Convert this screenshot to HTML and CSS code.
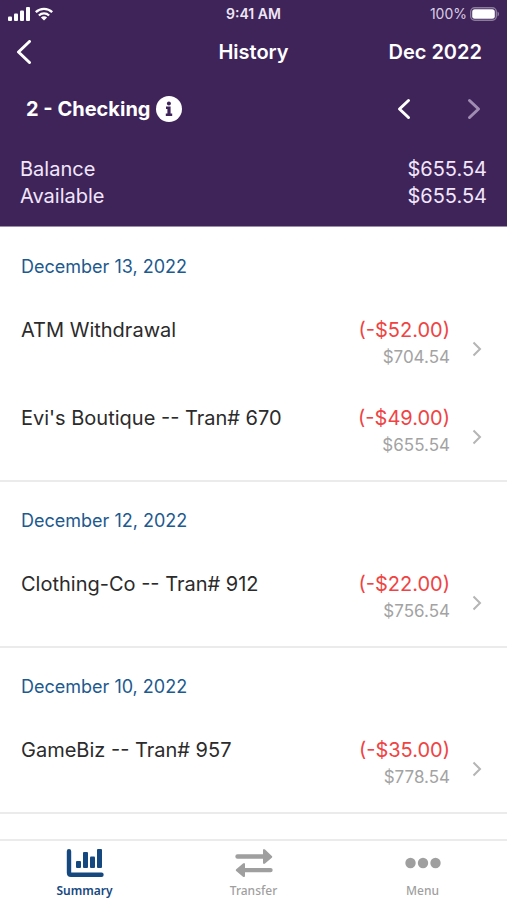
FILE: index.html
```html
<!DOCTYPE html>
<html lang="en">
<head>
<meta charset="utf-8">
<meta name="viewport" content="width=device-width, initial-scale=1">
<title>History</title>
<link rel="stylesheet" href="styles.css">
</head>
<body>
<svg class="defs" aria-hidden="true">
  <symbol id="chevron" viewBox="0 0 10 16"><path d="M1.500 1.500 8 8l-6.500 6.500"/></symbol>
</svg>
<header class="header">
  <div class="status">
    <div class="signals">
      <svg width="22" height="14" viewBox="0 0 22 14" aria-hidden="true"><g fill="#fff"><rect y="9.500" width="4" height="4.500" rx="1"/><rect x="6" y="6.500" width="4" height="7.500" rx="1"/><rect x="12" y="3.500" width="4" height="10.500" rx="1"/><rect x="18" y="0" width="4" height="14" rx="1"/></g></svg>
      <svg width="18" height="14" viewBox="0 0 18 14" aria-hidden="true"><g fill="none" stroke="#fff" stroke-width="2.300"><path d="M.8 5.200a11.800 11.800 0 0 1 16.400 0"/><path d="M3.900 8.500a7.400 7.400 0 0 1 10.200 0"/></g><path d="M9 13.600 5.900 10.500a4.400 4.400 0 0 1 6.200 0Z" fill="#fff"/></svg>
    </div>
    <span class="clock">9:41 AM</span>
    <div class="power">
      <span>100%</span>
      <svg width="29" height="14" viewBox="0 0 29 14" aria-hidden="true"><rect x=".7" y=".7" width="25.600" height="12.600" rx="4" fill="none" stroke="#8b7b9c" stroke-width="1.400"/><rect x="2.200" y="2.200" width="22.600" height="9.600" rx="2.500" fill="#fff"/><path d="M27.500 4.500c2 .8 2 4.200 0 5Z" fill="#8b7b9c"/></svg>
    </div>
  </div>
  <nav class="navbar">
    <button class="back" aria-label="Back"><svg width="16" height="24" viewBox="0 0 16 24"><path d="M13.500 1.500 2.500 12l11 10.500"/></svg></button>
    <h1>History</h1>
    <button class="month">Dec 2022</button>
  </nav>
  <div class="account">
    <h2>2 - Checking</h2>
    <button class="info" aria-label="Account information"><svg width="26" height="26" viewBox="0 0 26 26"><circle cx="13" cy="13" r="13" fill="#fff"/><path d="M10 10.500h4.600v7h1.600V20H9.800v-2.500h1.600V13H10Z" fill="#3f245a"/><circle cx="12.900" cy="7.600" r="2" fill="#3f245a"/></svg></button>
    <div class="pager">
      <button aria-label="Previous account"><svg width="14" height="22" viewBox="0 0 14 22"><path d="M11.500 2.500 2.500 11l9 8.500"/></svg></button>
      <button aria-label="Next account" disabled><svg width="14" height="22" viewBox="0 0 14 22"><path d="m2.500 2.500 9 8.500-9 8.500"/></svg></button>
    </div>
  </div>
  <dl class="balances">
    <div><dt>Balance</dt><dd>$655.54</dd></div>
    <div><dt>Available</dt><dd>$655.54</dd></div>
  </dl>
</header>
<main class="history">
  <section>
    <h3>December 13, 2022</h3>
    <a class="row" href="#"><span class="name">ATM Withdrawal</span><span class="sums"><span class="amount">(-$52.00)</span><span class="running">$704.54</span></span><svg class="chevron"><use href="#chevron"/></svg></a>
    <a class="row" href="#"><span class="name">Evi's Boutique -- Tran# 670</span><span class="sums"><span class="amount">(-$49.00)</span><span class="running">$655.54</span></span><svg class="chevron"><use href="#chevron"/></svg></a>
  </section>
  <section>
    <h3>December 12, 2022</h3>
    <a class="row" href="#"><span class="name">Clothing-Co -- Tran# 912</span><span class="sums"><span class="amount">(-$22.00)</span><span class="running">$756.54</span></span><svg class="chevron"><use href="#chevron"/></svg></a>
  </section>
  <section>
    <h3>December 10, 2022</h3>
    <a class="row" href="#"><span class="name">GameBiz -- Tran# 957</span><span class="sums"><span class="amount">(-$35.00)</span><span class="running">$778.54</span></span><svg class="chevron"><use href="#chevron"/></svg></a>
  </section>
</main>
<nav class="tabs">
  <a class="active" href="#"><svg width="38" height="28" viewBox="0 0 38 28" aria-hidden="true"><path d="M3 2.300v21.400q0 2 2 2h30.500" fill="none" stroke="currentColor" stroke-width="4.400" stroke-linecap="round" stroke-linejoin="round"/><g fill="currentColor"><rect x="10" y="12" width="5" height="7" rx="1"/><rect x="17" y="3" width="5" height="16" rx="1"/><rect x="24" y="7.500" width="5" height="11.500" rx="1"/><rect x="31" y="0" width="5" height="19" rx="1"/></g></svg>Summary</a>
  <a href="#"><svg width="38" height="28" viewBox="0 0 38 28" aria-hidden="true"><g fill="currentColor"><path d="M2.500 5.300H28V1.200q.4-2 2-.6l6.800 6.300q.9.900 0 1.800L30 14.500q-1.600 1.200-2-.8V9.700H2.500a2.200 2.200 0 0 1 0-4.400Z"/><path d="M35.500 18.900H10v-3.800q-.4-2-2-.6L1.200 20.200q-.9.900 0 1.800L8 27.700q1.600 1 2-.8v-3.600h25.500a2.200 2.200 0 0 0 0-4.400Z"/></g></svg>Transfer</a>
  <a href="#"><svg width="38" height="28" viewBox="0 0 38 28" aria-hidden="true"><g fill="currentColor"><circle cx="6.500" cy="14" r="5.200"/><circle cx="19" cy="14" r="5.200"/><circle cx="31.500" cy="14" r="5.200"/></g></svg>Menu</a>
</nav>
</body>
</html>
```
FILE: styles.css
```css
* { box-sizing: border-box; }

body {
  margin: 0;
  min-height: 100vh;
  display: flex;
  flex-direction: column;
  background: #fff;
  color: #2b2b2b;
  font-family: Inter, "Liberation Sans", sans-serif;
  font-size: 20px;
}

h1, h2, h3, dl, dt, dd { margin: 0; font-weight: 400; }

button {
  display: flex;
  padding: 0;
  border: 0;
  background: none;
  color: inherit;
  font: inherit;
}

a { color: inherit; text-decoration: none; }

svg { display: block; flex: none; }

.defs { width: 0; height: 0; position: absolute; }

.header {
  background: #3f245a;
  color: #fff;
  border-bottom: 1px solid #9b8ca9;
}

.header button svg {
  fill: none;
  stroke: currentColor;
  stroke-width: 3;
  stroke-linecap: round;
  stroke-linejoin: round;
}

.status {
  display: grid;
  grid-template-columns: 1fr auto 1fr;
  align-items: center;
  height: 27px;
  padding: 0 8px;
  font-size: 14px;
}

.signals { display: flex; gap: 5px; }
.clock { font-weight: 600; color: #eee6f5; }
.power { display: flex; justify-content: flex-end; align-items: center; gap: 3px; color: #d9cee2; }

.navbar {
  display: grid;
  grid-template-columns: 1fr auto 1fr;
  align-items: center;
  height: 49px;
  padding: 0 16px;
}

.navbar h1, .month { font-size: 20px; font-weight: 600; }
.month { justify-self: end; margin-right: 9px; }

.account {
  display: flex;
  align-items: center;
  gap: 6px;
  height: 66px;
  padding: 0 26px;
}

.account h2 { font-size: 20px; font-weight: 700; }
.header .info svg { stroke: none; }
.pager { display: flex; gap: 56px; margin-left: auto; }
.pager button:disabled { color: #a08db2; }

.balances {
  padding: 14px 20px 16px;
  line-height: 27px;
  color: #f1e6fa;
}

.balances div { display: flex; justify-content: space-between; }

.history { flex: 1; padding-top: 1px; }

.history section { border-bottom: 2px solid #ebebeb; padding-bottom: 10px; }

.history h3 {
  padding: 0 21px;
  font-size: 18px;
  line-height: 78px;
  color: #1d5a8f;
}

.row {
  display: flex;
  align-items: flex-start;
  height: 88px;
  padding: 11px 25px 0 21px;
  line-height: 27px;
}

.history section .row:last-child { height: 76px; }

.name { flex: 1; }
.sums { display: flex; flex-direction: column; text-align: right; }
.amount { color: #f04343; }
.running { color: #a3a3a3; font-size: 17px; }

.chevron {
  width: 10px;
  height: 16px;
  margin: 24px 0 0 22px;
  fill: none;
  stroke: #b5b5b5;
  stroke-width: 2;
}

.tabs {
  position: sticky;
  bottom: 0;
  display: flex;
  height: 61px;
  border-top: 2px solid #ebebeb;
  background: #fff;
}

.tabs a {
  flex: 1;
  display: flex;
  flex-direction: column;
  align-items: center;
  gap: 5px;
  padding-top: 8px;
  color: #9f9f9f;
  font: 500 12px/18px "Noto Sans", "Open Sans", sans-serif;
}

.tabs .active { color: #15487f; font-weight: 600; }
```
